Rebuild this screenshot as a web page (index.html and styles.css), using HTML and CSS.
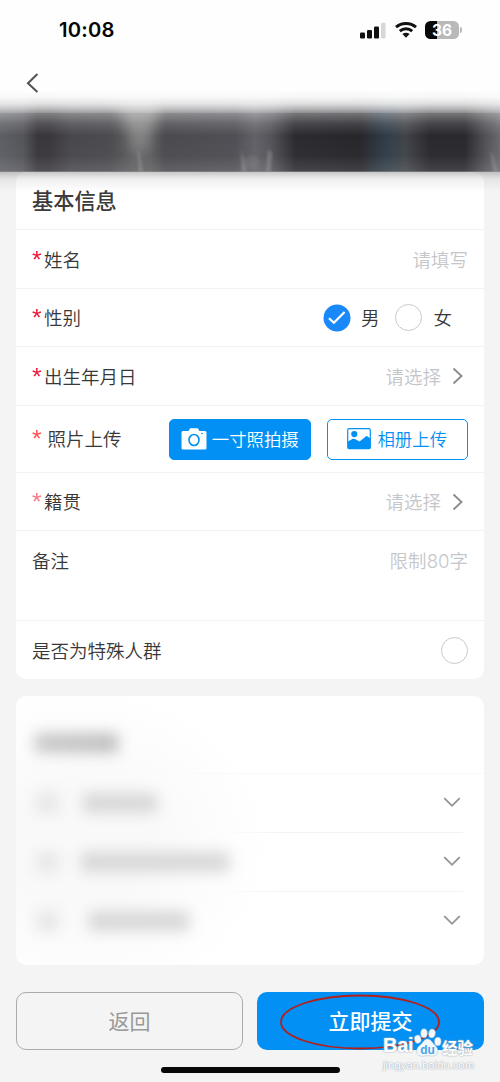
FILE: index.html
```
<!DOCTYPE html>
<html lang="zh-CN">
<head>
<meta charset="utf-8">
<meta name="viewport" content="width=device-width, initial-scale=1">
<title>基本信息</title>
<link rel="stylesheet" href="styles.css">
</head>
<body>
<div class="screen">
  <header class="statusbar">
    <span class="time">10:08</span>
    <div class="indicators">
      <svg class="signal" viewBox="0 0 26 17" width="26" height="17">
        <rect x="0" y="10.5" width="5" height="6" rx="1.3" fill="#111"/>
        <rect x="7" y="8" width="5" height="8.5" rx="1.3" fill="#111"/>
        <rect x="14" y="4.5" width="5" height="12" rx="1.3" fill="#111"/>
        <rect x="21" y="0.7" width="4.6" height="15.8" rx="1.3" fill="#d8d8d8"/>
      </svg>
      <svg class="wifi" viewBox="0 0 22 16" width="22" height="16">
        <g fill="none" stroke="#111" stroke-width="2.9">
          <path d="M1 5.2C6.6.2 15.4.2 21 5.2"/>
          <path d="M4.8 9.2C8.4 6 13.6 6 17.2 9.2"/>
        </g>
        <path d="M7.4 12Q11 9.3 14.6 12L11 15.8Z" fill="#111"/>
      </svg>
      <div class="battery"><span class="battery-body">36</span><span class="battery-tip"></span></div>
    </div>
  </header>

  <nav class="navbar">
    <svg viewBox="0 0 14 20" width="14" height="20"><path d="M11.4 1L2 10.2L11.4 19" fill="none" stroke="#555" stroke-width="2.1"/></svg>
  </nav>

  <svg class="banner" viewBox="0 0 500 110" width="500" height="110" preserveAspectRatio="none">
    <defs>
      <linearGradient id="tones">
        <stop offset="0" stop-color="#5d5f65"/><stop offset=".045" stop-color="#55565b"/>
        <stop offset=".075" stop-color="#39373c"/><stop offset=".1" stop-color="#3a383d"/>
        <stop offset=".14" stop-color="#48474c"/><stop offset=".22" stop-color="#4c4b50"/>
        <stop offset=".265" stop-color="#5d5d5f"/><stop offset=".3" stop-color="#5c5c5e"/>
        <stop offset=".33" stop-color="#4b4a4f"/><stop offset=".47" stop-color="#504f55"/>
        <stop offset=".51" stop-color="#626167"/><stop offset=".54" stop-color="#56555b"/>
        <stop offset=".59" stop-color="#2c2b30"/><stop offset=".72" stop-color="#27262b"/>
        <stop offset=".77" stop-color="#303d49"/><stop offset=".81" stop-color="#414449"/>
        <stop offset=".86" stop-color="#2a292e"/><stop offset=".93" stop-color="#2a292e"/>
        <stop offset=".97" stop-color="#505055"/><stop offset="1" stop-color="#69696e"/>
      </linearGradient>
      <linearGradient id="veil" gradientUnits="userSpaceOnUse" x1="0" y1="0" x2="0" y2="83">
        <stop offset="0" stop-color="#fff"/><stop offset=".1" stop-color="#fff" stop-opacity=".96"/>
        <stop offset=".18" stop-color="#fff" stop-opacity=".84"/><stop offset=".24" stop-color="#fff" stop-opacity=".65"/>
        <stop offset=".285" stop-color="#fff" stop-opacity=".48"/><stop offset=".29" stop-color="#fff" stop-opacity=".36"/>
        <stop offset=".42" stop-color="#fff" stop-opacity=".13"/>
        <stop offset=".56" stop-color="#fff" stop-opacity="0"/><stop offset=".8" stop-color="#fff" stop-opacity=".02"/>
        <stop offset="1" stop-color="#fff" stop-opacity=".13"/>
      </linearGradient>
      <linearGradient id="shade" x2="0" y2="1">
        <stop offset="0" stop-color="#444" stop-opacity=".3"/><stop offset=".35" stop-color="#555" stop-opacity=".1"/><stop offset="1" stop-color="#777" stop-opacity="0"/>
      </linearGradient>
      <filter id="soft" x="-1" y="-1" width="3" height="3"><feGaussianBlur stdDeviation="7"/></filter>
      <filter id="soft1" filterUnits="userSpaceOnUse" x="0" y="40" width="500" height="60"><feGaussianBlur stdDeviation="1.4"/></filter>
      <clipPath id="strip"><rect width="500" height="83"/></clipPath>
    </defs>
    <g clip-path="url(#strip)">
      <rect width="500" height="83" fill="url(#tones)"/>
      <path d="M118 14H160L145 64H135Z" fill="#aaa" opacity=".55" filter="url(#soft)"/>
      <rect width="500" height="83" fill="url(#veil)"/>
      <g filter="url(#soft1)" fill="#aaa" opacity=".4">
        <path d="M137 60L140 65L143 84H139Z"/><path d="M241 60L244 70L247 84H242Z"/><path d="M268 60L272 64L270 84H266Z"/><path d="M490 62L493 66L498 84H494Z"/>
        <circle cx="252" cy="73" r="7" opacity=".35"/>
      </g>
      <rect y="82" width="500" height="1" fill="#999" opacity=".45"/>
    </g>
    <rect y="83" width="500" height="20" fill="url(#shade)"/>
  </svg>

  <main class="content">
    <section class="card card-form">
      <h2 class="card-title">基本信息</h2>
      <div class="row"><label><i class="req">*</i>姓名</label><span class="hint">请填写</span></div>
      <div class="row">
        <label><i class="req">*</i>性别</label>
        <div class="choices">
          <svg class="check" viewBox="0 0 28 28" width="28" height="28"><circle cx="14" cy="14" r="13.5" fill="#1989fa"/><path d="M6 14.2L10.9 18.8L21.6 8" fill="none" stroke="#fff" stroke-width="2.2"/></svg>
          <span class="male">男</span><span class="radio"></span><span class="female">女</span>
        </div>
      </div>
      <div class="row">
        <label><i class="req">*</i>出生年月日</label>
        <div class="picker"><span class="hint">请选择</span><svg viewBox="0 0 11 18" width="11" height="18"><path d="M1.5 1.5L9.5 9L1.5 16.5" fill="none" stroke="#8c8c8c" stroke-width="1.9"/></svg></div>
      </div>
      <div class="row row-photo">
        <label><i class="req req-spaced">*</i>照片上传</label>
        <div class="uploads">
          <button class="upload upload-solid">
            <svg viewBox="0 0 26 22" width="26" height="22"><path d="M2 3H7.7L8.5 1.2Q8.9.3 9.8.3H16.2Q17.1.3 17.5 1.2L18.3 3H24Q25.5 3 25.5 4.5V20Q25.5 21.5 24 21.5H2Q.5 21.5.5 20V4.5Q.5 3 2 3Z" fill="#fff"/><ellipse cx="13" cy="12" rx="5" ry="5.5" fill="none" stroke="#0290f4" stroke-width="1.6"/><circle cx="21" cy="5.5" r=".8" fill="#0290f4"/></svg>一寸照拍摄
          </button>
          <button class="upload upload-line">
            <svg viewBox="0 0 24 22" width="24" height="22"><rect x=".7" y=".7" width="22.6" height="20" rx="1.5" fill="#fff" stroke="#0290f4" stroke-width="1.2"/><path d="M1 13.5L5.7 10.8Q7 10.4 8.4 11.2L12.5 13.5Q16 11 19 8.3Q19.8 7.8 20.6 8.5L23.3 10.5V20.7H1Z" fill="#0290f4"/><circle cx="7.3" cy="6.1" r="3.1" fill="#0290f4"/></svg>相册上传
          </button>
        </div>
      </div>
      <div class="row">
        <label><i class="req req-faint">*</i>籍贯</label>
        <div class="picker"><span class="hint">请选择</span><svg viewBox="0 0 11 18" width="11" height="18"><path d="M1.5 1.5L9.5 9L1.5 16.5" fill="none" stroke="#8c8c8c" stroke-width="1.9"/></svg></div>
      </div>
      <div class="row row-note"><label>备注</label><span class="hint">限制<span class="limit">80</span>字</span></div>
      <div class="row row-last"><label>是否为特殊人群</label><span class="radio"></span></div>
    </section>

    <section class="card card-list">
      <div class="smudge-title"><span class="smudge"></span></div>
      <div class="fold"><span class="smudge smudge-mark"></span><span class="smudge smudge-a"></span><svg viewBox="0 0 18 11" width="18" height="11"><path d="M1.3 1.2L9 8.8L16.7 1.2" fill="none" stroke="#949494" stroke-width="1.8"/></svg></div>
      <div class="fold"><span class="smudge smudge-mark"></span><span class="smudge smudge-b"></span><svg viewBox="0 0 18 11" width="18" height="11"><path d="M1.3 1.2L9 8.8L16.7 1.2" fill="none" stroke="#949494" stroke-width="1.8"/></svg></div>
      <div class="fold"><span class="smudge smudge-mark"></span><span class="smudge smudge-c"></span><svg viewBox="0 0 18 11" width="18" height="11"><path d="M1.3 1.2L9 8.8L16.7 1.2" fill="none" stroke="#949494" stroke-width="1.8"/></svg></div>
    </section>
  </main>

  <footer class="actions">
    <button class="action action-back">返回</button>
    <button class="action action-submit">立即提交</button>
  </footer>
  <div class="home-bar"></div>

  <svg class="ring" viewBox="0 0 160 56" width="160" height="56"><ellipse cx="80" cy="28" rx="79" ry="26.5" fill="none" stroke="#b3201b" stroke-width="1.8"/></svg>

  <div class="watermark">
    <div class="brand">
      <span class="brand-latin">Bai</span>
      <svg viewBox="0 0 28 29" width="28" height="29">
        <g fill="#f3f8fc" stroke="#a9bdcc" stroke-width=".5"><ellipse cx="3.8" cy="11.2" rx="3.3" ry="4.1" transform="rotate(-12 3.8 11.2)"/><ellipse cx="10" cy="5.3" rx="3.3" ry="4.5"/><ellipse cx="18" cy="5.5" rx="3.3" ry="4.4" transform="rotate(10 18 5.5)"/><ellipse cx="23.8" cy="13.5" rx="3.3" ry="4.2"/>
        <path d="M13.5 11C17 11 17.8 14.5 21 17.2C25 20.5 25.2 27.5 19.5 28C16 28.3 14 27.2 11 27.9C6 29 2.5 27.2 2.7 22.5C2.8 18.5 7 17 8.8 14.2C10 12.3 11.3 11 13.5 11Z"/></g>
        <text x="13.5" y="25.5" text-anchor="middle" class="paw-text">du</text>
      </svg>
      <span class="brand-cn">经验</span>
    </div>
    <div class="site">jingyan.baidu.com</div>
  </div>
</div>
</body>
</html>
```
FILE: styles.css
```
* { box-sizing: border-box; }
body { margin: 0; background: #f4f4f4; font-family: "Noto Sans CJK SC", sans-serif; color: #383838; }
.screen { position: relative; width: 500px; height: 1082px; overflow: hidden; display: flex; flex-direction: column; background: #f4f4f4; }
button { font: inherit; margin: 0; padding: 0; }
svg { display: block; flex: none; }

.statusbar { flex: none; height: 60px; padding: 0 38px 0 59px; display: flex; align-items: center; justify-content: space-between; background: #fefefe; }
.time { font: 600 20.2px/24px Inter, sans-serif; letter-spacing: .2px; color: #050505; }
.indicators { display: flex; align-items: center; gap: 8px; }
.indicators .wifi { margin-left: 1px; }
.battery { display: flex; align-items: center; gap: 1px; }
.battery-body { width: 34px; height: 18px; border-radius: 5.5px; background: linear-gradient(90deg, #080808 36%, #b9b9b9 36%); color: #fff; font: 700 15.5px/19px Inter, sans-serif; text-align: center; }
.battery-tip { width: 2px; height: 6px; border-radius: 0 3px 3px 0; background: #b9b9b9; }

.navbar { flex: none; height: 112px; padding: 13px 0 0 26px; background: #fefefe; }
.navbar svg { position: relative; z-index: 2; }
.banner { position: absolute; left: 0; top: 89px; }

.content { flex: none; padding: 0 16px; }
.card { background: #fff; border-radius: 10px; }
.card-form { border-radius: 10px; }
.card-title { margin: 0; height: 58px; padding: 0 16px; border-bottom: 1px solid #f1f2f3; font-size: 21.2px; line-height: 56px; font-weight: 500; color: #3b3b3b; }
.row { height: 58.5px; padding: 0 16px; display: flex; align-items: center; justify-content: space-between; border-bottom: 1px solid #f1f2f3; font-size: 18.5px; font-weight: 350; }
.row label { display: flex; align-items: center; }
.req { width: 12px; height: 22px; font: 400 19px/22px "Liberation Sans", sans-serif; font-style: normal; color: #f0163a; transform: scale(1.3); transform-origin: 0 30%; }
.req-spaced { width: 15.5px; color: #ff5048; }
.req-faint { color: #f77686; }
.hint { color: #c5c6ca; }
.limit { font-family: Inter, sans-serif; font-weight: 300; font-size: 18.6px; }
.choices { display: flex; align-items: center; padding-right: 16px; }
.choices .check, .choices .radio { margin-top: 1px; }
.male { margin: 0 16px 0 10px; }
.female { margin-left: 11px; }
.radio { width: 27px; height: 27px; border: 1.2px solid #c8c9cc; border-radius: 50%; }
.picker { display: flex; align-items: center; gap: 11px; padding-right: 5px; }
.picker svg { margin-top: 1px; }
.row-photo { height: 67px; }
.row-photo label { padding-bottom: 2px; }
.uploads { display: flex; gap: 16px; padding-top: 2px; }
.upload { width: 141.5px; height: 41px; border-radius: 5px; border: 1px solid #0290f4; display: flex; align-items: center; justify-content: center; gap: 5px; font-size: 17.4px; line-height: 24px; padding-bottom: 1px; font-weight: 350; }
.upload-solid { background: #0290f4; color: #fff; }
.upload-line { background: #fff; color: #0290f4; gap: 6px; }
.row-note { height: 90px; align-items: flex-start; line-height: 58px; }
.row-last { border: 0; height: 58px; }

.card-list { margin-top: 17px; height: 269px; overflow: hidden; background: radial-gradient(ellipse 190px 160px at 65px 150px, #f9f9f9 35%, #fff 100%); }
.smudge-title { height: 77.5px; padding: 37px 0 0 19px; border-bottom: 1px solid #fafafa; }
.smudge { display: block; filter: blur(7px); background: #d8d8d8; height: 20px; }
.smudge-title .smudge { width: 83px; background: linear-gradient(90deg, #cacaca, #bfbfbf); }
.fold { height: 59px; margin-right: 21px; display: flex; align-items: center; border-bottom: 1px solid #f4f4f4; border-image: linear-gradient(90deg, transparent 45%, #f2f2f2 60%) 1; }
.fold:last-child { border: 0; height: 58px; }
.fold svg { margin-left: auto; margin-right: 2px; }
.smudge-mark { width: 23px; margin-left: 20px; background: #e7e7e7; }
.smudge-a { width: 74px; margin-left: 24px; }
.smudge-b { width: 148px; margin-left: 22px; }
.smudge-c { width: 100px; margin-left: 30px; }

.actions { flex: none; display: flex; justify-content: space-between; padding: 27px 16px 0; }
.action { height: 58px; border-radius: 10px; font-size: 21px; line-height: 54px; padding-bottom: 3px; }
.action-back { width: 227px; border: 1px solid #ababab; background: #f4f4f4; color: #999; }
.action-submit { width: 227px; border: 0; background: #0290f4; color: #fff; font-weight: 500; }
.home-bar { width: 179px; height: 6px; margin: 17px auto 0; border-radius: 3px; background: #080808; flex: none; }
.ring { position: absolute; left: 280px; top: 994px; }

.watermark { position: absolute; left: 383px; top: 1028px; width: 92px; color: #fff; text-shadow: 0 0 1px #9eabb5, 0 0 2px #aab4bb; }
.brand { display: flex; align-items: flex-end; height: 29px; }
.brand-latin { width: 31px; font: 700 20px/23px "Liberation Sans", sans-serif; letter-spacing: -.3px; }
.brand-cn { font-size: 15.5px; line-height: 19px; font-weight: 700; white-space: nowrap; }
.paw-text { font: 700 12px "Liberation Sans", sans-serif; fill: #4aa6e3; text-shadow: none; }
.site { font: 11.3px/12px "Liberation Sans", sans-serif; margin-top: 2px; white-space: nowrap; }
```
